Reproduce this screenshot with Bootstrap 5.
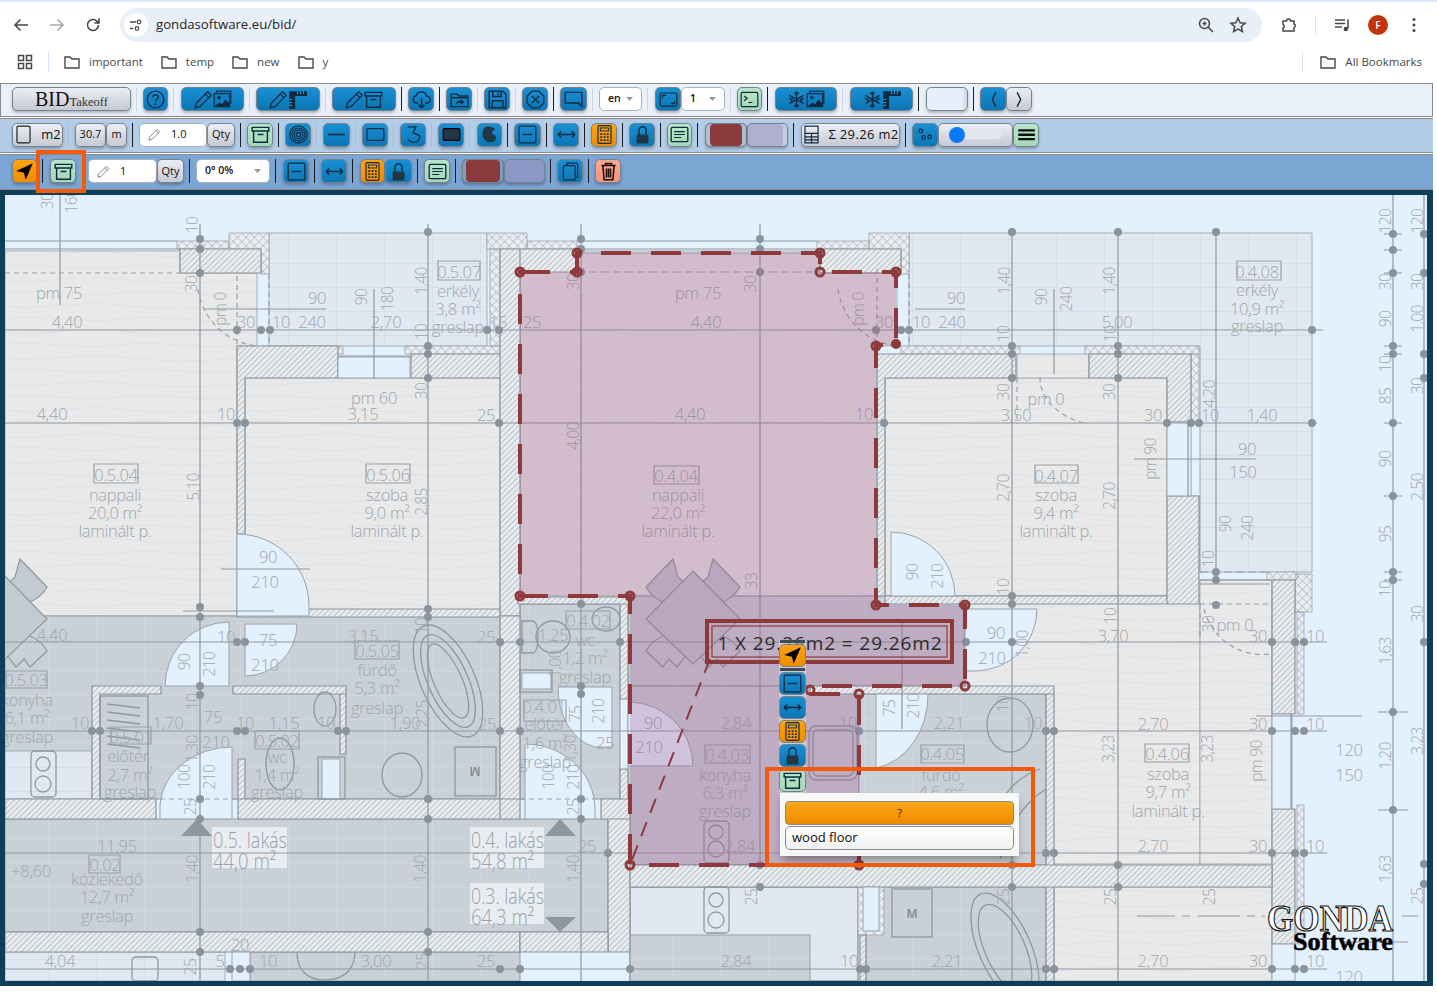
<!DOCTYPE html>
<html lang="en"><head><meta charset="utf-8"><title>BID Takeoff</title>
<link href="https://cdn.jsdelivr.net/npm/bootstrap@5.3.0/dist/css/bootstrap.min.css" rel="stylesheet">
<style>
html,body{height:993px;overflow:hidden;background:#fff}
body{font-family:"Open Sans","Liberation Sans",sans-serif;position:relative}
.top-strip{height:2px;background:#dde8f8}
.chrome-row{height:40px;padding-top:6px}
.chrome-ico{width:36px;flex:none;color:#474747;display:flex;justify-content:center}
.chrome-ico svg{width:18px;height:18px}
.first-ico{margin-left:3px}
.omni{width:1142px;flex:none;height:34px;margin-left:9px;background:#e9eff9;border-radius:17px;font-size:13.2px;color:#1f1f1f;padding-left:4px}
.site-dot{width:24px;height:24px;border-radius:50%;background:#fff;margin-right:8px;display:flex;align-items:center;justify-content:center}
.omni-end{margin-left:auto;gap:14px;padding-right:15px}
.omni-end svg{width:18px;height:18px;color:#474747}
.after-omni{gap:0;margin-left:9px;flex:none}
.cs{width:1px;height:20px;background:#d3e3fd;flex:none}
.avatar{width:20px;height:20px;border-radius:50%;background:#c5320d;color:#fff;font-size:10px;font-weight:600;display:flex;align-items:center;justify-content:center;flex:none}
.bm-row{height:41px;padding:0 0 2px 16px;font-size:11.5px;color:#474747;font-family:"Open Sans",sans-serif}
.bm{display:flex;align-items:center;gap:8px}
.bm svg{width:18px;height:18px}
.bm-grid{width:18px;height:18px;margin-right:14px}
.bm-a{margin-left:14px;margin-right:17px}.bm-b{margin-right:17px}
.bm-end{margin-left:auto;margin-right:15px;gap:16px}
.bar{display:flex;align-items:center;padding-left:12px;padding-bottom:2px;width:1433px}
.bar1{height:34px;background:#e9f0fa;border:1px solid #8a8a8a;margin-bottom:1px;padding-left:11px}
.bar2{height:35px;background:#b3cde8;border-top:1px solid #8a8a8a;border-bottom:1px solid #8a8a8a;margin-bottom:1px}
.bar3{height:36px;background:#7ba5d3;border-top:1px solid #8a8a8a;border-bottom:1px solid #8a8a8a}
.vs,.vd{width:1px;height:24px;margin:0 6px 0 5px;flex:none}
.vs{background:#cfd6de}.vd{background:#1c1c1c}
.bar2 .vs{background:#a9bed6}.bar3 .vs{background:transparent}
.wide{margin-right:7px}
.btn.tb{padding:0;height:24px;border-radius:5px;border:1px solid #75838e;display:inline-flex;align-items:center;justify-content:center;flex:none;box-shadow:0 2px 3px rgba(0,0,0,.25);font-size:11px;color:#111;font-family:"Open Sans",sans-serif}
.btn.tb svg{width:19px;height:19px;color:#0d2b40}
.b-blue{background:linear-gradient(#1a90d4,#0a76b4)}
.b-green{background:linear-gradient(#b9e6c9,#a5d8b8)}
.b-orange{background:linear-gradient(#ffa312,#ee8c00)}
.b-red{background:linear-gradient(#fcaa93,#f7917a)}
.b-gray{background:linear-gradient(#eceef4,#c7c9d3)}
.btn.b-blank{background:linear-gradient(90deg,#e6f0fc 85%,#cfd6e0)}
.btn.tb.b-wine{background:#8c3b3d;box-shadow:inset 4px 0 0 #aebfd6,inset -4px 0 0 #aebfd6,0 2px 3px rgba(0,0,0,.25)}
.btn.tb.b-lav{background:#b1afcf;box-shadow:inset -4px 0 0 #c6cde0,0 2px 3px rgba(0,0,0,.25)}
.bar3 .btn.tb.b-wine{box-shadow:inset 3px 0 0 #7f9ec5,inset -3px 0 0 #7f9ec5,0 2px 3px rgba(0,0,0,.25)}
.bar3 .btn.tb.b-lav{background:#8b97c4;box-shadow:0 2px 3px rgba(0,0,0,.25)}
.w21{width:21px}.w25{width:25px}.w26{width:26px}.w27{width:27px}.w28{width:28px}.w31{width:31px}.w41{width:41px}.w42{width:42px}.w43{width:43px}.w44{width:44px}.w51{width:51px}.w62{width:62px}.w63{width:63px}.w64{width:64px}.w68{width:68px}.w69{width:69px}.w74{width:74px}.w75{width:75px}.w99{width:99px}.w119{width:119px}
.brand{font-family:"Liberation Serif",serif;font-size:20px;line-height:1}
.brand small{font-size:12.5px;color:#333}
.btn.tb.t13{font-size:13px}
.btn.tb.t12{font-size:13px;gap:7px;letter-spacing:.35px}
.fieldish{height:24px;border-radius:5px;background:#fff;border:1px solid #aab2bb;display:flex;align-items:center;font-size:11px;color:#111;padding-left:8px;gap:10px;flex:none;font-weight:500}
.fieldish svg{width:13px;height:13px;color:#777}
.form-select.sel{height:24px;padding:0 0 0 8px;font-size:10.5px;font-weight:600;border-radius:5px;border:1px solid #aab2bb;flex:none;color:#111;background-size:7px 4px;background-position:right 8px center;background-image:url("data:image/svg+xml,%3csvg xmlns='http://www.w3.org/2000/svg' viewBox='0 0 7 4'%3e%3cpath fill='%23999' d='M0 0h7L3.500 4z'/%3e%3c/svg%3e");font-family:"Open Sans",sans-serif}
.btn.tb.sldr{padding:0 10px}
.form-range.rng{height:14px;padding:0}
.form-range.rng::-webkit-slider-runnable-track{height:9px;background:#e3e7ee;border-radius:5px}
.form-range.rng::-webkit-slider-thumb{width:16px;height:16px;margin-top:-3.5px;background:#0d78fb}
.stage{width:1433px;height:796px;background:#0e3e5a;padding:5px 6px 5px 5px;position:relative}
.plan{display:block;width:1422px;height:786px;background:#e3f0fe}
.stage .t{font-family:"Open Sans",sans-serif;font-weight:300;font-size:16.5px;fill:#a0a6ad;text-anchor:middle;dominant-baseline:central;letter-spacing:-.3px}
.stage .t.r{font-size:15.5px;letter-spacing:-.6px}
.stage .t.big{font-size:22px;text-anchor:start;fill:#9aa1a8;letter-spacing:0}
.stage .t.em{font-size:12px;font-weight:600;fill:#7e868e}
.hw{fill:url(#hatch);stroke:#8a939b;stroke-width:1.2}
.xw{fill:url(#xh);stroke:#9aa3ab;stroke-width:.8}
.wd{fill:url(#wood);stroke:#a7aeb5;stroke-width:1}
.tl{fill:url(#tile);stroke:#939ba3;stroke-width:1}
.tl2{fill:url(#tile2);stroke:#a4adb6;stroke-width:1}
.pl{fill:#e1e8f1;stroke:#939ba3;stroke-width:1.500}
.dr{fill:#e3f0fe;stroke:#99a2ab;stroke-width:1}
.fu{fill:none;stroke:#8f98a0;stroke-width:1.3}
.nb{fill:none;stroke:#99a0a7;stroke-width:1.2}
.dm{fill:none;stroke:#8f98a0;stroke-width:1.2}
.dt{fill:none;stroke:#8a939b;stroke-width:8;stroke-linecap:round}
.sel-fill{fill:rgb(163,90,143);fill-opacity:.3}
.sel-line{fill:none;stroke:#8e3a3c;stroke-width:4;stroke-dasharray:30 20}
.sel-nd{fill:none;stroke:#8e3a3c;stroke-width:3}
.lbl{font-family:"Open Sans",sans-serif;font-size:19px;fill:#2c2c2c;text-anchor:middle;letter-spacing:.9px}
.logo1{font-family:"Liberation Serif",serif;font-weight:700;font-size:38px;fill:#fff;stroke:#111;stroke-width:1.200;text-anchor:start}
.logo2{font-family:"Liberation Serif",serif;font-weight:700;font-size:25px;fill:#000;stroke:#000;stroke-width:.5;text-anchor:start}
.vbar{position:absolute;left:779px;top:450px;width:27px;display:flex;flex-direction:column;background:rgba(235,235,235,.45)}
.vbar .btn.tb{width:27px;height:23px;box-shadow:none;margin-bottom:1px;border-radius:5px}
.vrule{height:3px;background:#3e4c55;margin:0 1px 1px}
.vbar .gapm{margin-top:1px}
.pop{position:absolute;left:780px;top:603px;width:239px;height:63px;background:#f7f7f7;padding:8px 5px 7px;box-shadow:0 6px 8px -2px rgba(0,0,0,.35)}
.btn.pop-q{display:block;width:100%;height:24px;padding:0;font-size:11px;color:#222;border:1px solid #8a8a8a;border-radius:4px;background:linear-gradient(#ffa815,#ec8a02)}
.btn.pop-w{display:block;width:100%;height:24px;margin-top:1px;padding:0 6px;text-align:left;font-size:13px;color:#111;border:1px solid #8a8a8a;border-radius:5px;background:linear-gradient(#fff,#f0f0f0)}
.mark-box{position:absolute;border:4px solid #f55a0a;pointer-events:none}
.mb-a{left:36px;top:150px;width:50px;height:43px}
.mb-b{left:765px;top:767px;width:270px;height:100px}
.sprite{position:absolute;width:0;height:0}
</style></head><body>
<svg class="sprite" aria-hidden="true"><defs>
<g id="pencil-shape"><path d="M11.5 1.5l3 3L5 14l-4 1 1-4z" fill="none" stroke="currentColor" stroke-width="1.1"/><path d="M9.5 3.5l3 3" stroke="currentColor" stroke-width="1"/></g>
<symbol id="i-pencil" viewBox="0 0 16 16"><use href="#pencil-shape"/></symbol>
<symbol id="i-help" viewBox="0 0 16 16"><circle cx="8" cy="8" r="7" fill="none" stroke="currentColor" stroke-width="1.1"/><path d="M5.6 6.2C5.7 3.4 10.4 3.4 10.4 6c0 1.8-2.4 1.8-2.4 3.8" fill="none" stroke="currentColor" stroke-width="1.2"/><circle cx="8" cy="12" r=".8" fill="currentColor"/></symbol>
<symbol id="i-image" viewBox="0 0 16 16"><rect x="3" y="1" width="12" height="10" fill="none" stroke="currentColor"/><rect x="1" y="3" width="13" height="11" fill="#0e80c2" stroke="currentColor"/><circle cx="5" cy="6.5" r="1.5" fill="currentColor"/><path d="M1.5 13.5l4-3 2 1.500 3-4 3 3v3z" fill="currentColor"/></symbol>
<symbol id="i-ruler" viewBox="0 0 16 16"><path d="M1 1h15v4H6v11H1z" fill="currentColor"/><path d="M8 1v2.500M10.500 1v2.500M13 1v2.500M1 8h2.500M1 10.500h2.500M1 13h2.500" stroke="#2b95d4" stroke-width="1"/></symbol>
<symbol id="i-archive" viewBox="0 0 16 16"><path d="M1 2h14v3H1zM2.200 5v9.500h11.600V5M5.500 8h5" fill="none" stroke="currentColor" stroke-width="1.200"/></symbol>
<symbol id="i-cloud" viewBox="0 0 16 16"><path d="M5 11H3.800A3.200 3.200 0 0 1 3.500 4.700 4.600 4.600 0 0 1 12.300 5 3 3 0 0 1 12.500 11H11M8 6.500V15M5.500 12.500L8 15l2.500-2.500" fill="none" stroke="currentColor" stroke-width="1.200"/></symbol>
<symbol id="i-folder" viewBox="0 0 16 16"><path d="M1 3.500h5l1.500 1.500h7.500v9H1zM1 6.500h14" fill="none" stroke="currentColor" stroke-width="1.200"/><path d="M5 12c.3-2.500 2-3 4-3V7.500L12 10l-3 2.500V11c-1.700 0-3 .2-4 1z" fill="currentColor"/></symbol>
<symbol id="i-save" viewBox="0 0 16 16"><path d="M1 1h11.500L15 3.500V15H1zM4 1v4.500h7V1M8.500 2v2.500M3.500 15V9h9v6" fill="none" stroke="currentColor" stroke-width="1.200"/></symbol>
<symbol id="i-xo" viewBox="0 0 16 16"><path d="M5 1h6l4 4v6l-4 4H5l-4-4V5zM5 5l6 6M11 5l-6 6" fill="none" stroke="currentColor" stroke-width="1.100"/></symbol>
<symbol id="i-chat" viewBox="0 0 16 16"><path d="M1 2h14v12l-3-3H1z" fill="none" stroke="currentColor" stroke-width="1.200"/></symbol>
<symbol id="i-screen" viewBox="0 0 16 16"><rect x="1" y="2.500" width="14" height="11" rx="1" fill="none" stroke="currentColor"/><path d="M3 7V4.500h3M13 9v2.500h-3" fill="none" stroke="currentColor"/></symbol>
<symbol id="i-term" viewBox="0 0 16 16"><rect x="1" y="2" width="14" height="12" rx="1" fill="none" stroke="currentColor"/><path d="M3.500 5L6 7 3.500 9M7 10.500h3.500" fill="none" stroke="currentColor"/></symbol>
<symbol id="i-snow" viewBox="0 0 16 16"><path d="M8 1v14M2 4.500l12 7M14 4.500l-12 7M6.200 2.200L8 4l1.800-1.800M6.200 13.800L8 12l1.800 1.800M1.500 7l2.800.8-.7 2.500M14.500 7l-2.800.8.700 2.500" fill="none" stroke="currentColor" stroke-width="1.200"/></symbol>
<symbol id="i-target" viewBox="0 0 16 16"><circle cx="8" cy="8" r="7.300" fill="none" stroke="currentColor"/><circle cx="8" cy="8" r="5.500" fill="none" stroke="currentColor"/><circle cx="8" cy="8" r="3.700" fill="none" stroke="currentColor"/><circle cx="8" cy="8" r="1.800" fill="none" stroke="currentColor"/></symbol>
<symbol id="i-dash" viewBox="0 0 16 16"><path d="M1 8h14" stroke="currentColor" stroke-width="1.400"/></symbol>
<symbol id="i-rect" viewBox="0 0 16 16"><rect x="1" y="3" width="14" height="10" rx="1" fill="none" stroke="currentColor" stroke-width="1.100"/></symbol>
<symbol id="i-lasso" viewBox="0 0 16 16"><path d="M3 1.500h7L7.500 6.500 13 9c1 3-1.500 5.500-4 5.500-2.500 0-4.500-.5-5.500-2.500" fill="none" stroke="currentColor" stroke-width="1.100"/></symbol>
<symbol id="i-rectf" viewBox="0 0 16 16"><rect x="1" y="3" width="14" height="10" rx="1" fill="#213746" stroke="#000"/></symbol>
<symbol id="i-blob" viewBox="0 0 16 16"><path d="M5 1.500c3-1 6 .5 8 2-1.500 1-3 1.500-3 3 0 2 4 1.500 3.500 4.500-.500 3-2.500 4-5.500 3.500C4.500 14 2 11.500 2 8c0-3 1-5.500 3-6.500z" fill="#213746"/></symbol>
<symbol id="i-dsq" viewBox="0 0 16 16"><rect x="1" y="1" width="14" height="14" rx="1" fill="none" stroke="currentColor" stroke-width="1.100"/><path d="M4 8h8" stroke="currentColor" stroke-width="1.200"/></symbol>
<symbol id="i-lr" viewBox="0 0 16 16"><path d="M1 8h14M3.500 5.500L1 8l2.500 2.500M12.500 5.500L15 8l-2.500 2.500" fill="none" stroke="currentColor" stroke-width="1.100"/></symbol>
<symbol id="i-calc" viewBox="0 0 16 16"><rect x="2.500" y="0.500" width="11" height="15" rx="1" fill="none" stroke="currentColor"/><rect x="4.500" y="2.500" width="7" height="2.500" fill="none" stroke="currentColor" stroke-width=".8"/><path d="M4.500 7h1.500v1.500H4.500zM7.300 7h1.500v1.500H7.300zM10 7h1.500v1.500H10zM4.500 9.500h1.500V11H4.500zM7.300 9.500h1.500V11H7.300zM10 9.500h1.500V11H10zM4.500 12h1.500v1.500H4.500zM7.300 12h1.500v1.500H7.300zM10 12h1.500v1.500H10z" fill="currentColor"/></symbol>
<symbol id="i-lock" viewBox="0 0 16 16"><path d="M5 8V4.500a3 3 0 0 1 6 0V8" fill="none" stroke="currentColor" stroke-width="1.200"/><rect x="3" y="8" width="10" height="7.500" rx=".5" fill="#213746"/></symbol>
<symbol id="i-card" viewBox="0 0 16 16"><rect x="1" y="2" width="14" height="12" rx="1" fill="none" stroke="currentColor" stroke-width="1.100"/><path d="M3.500 5.500h9M3.500 8h9M3.500 10.500h6" stroke="currentColor" stroke-width="1"/></symbol>
<symbol id="i-table" viewBox="0 0 16 16"><path d="M2.500 1h11v14h-11zM2.500 7h11M2.500 10h11M2.500 12.500h11M8 7v8" fill="none" stroke="currentColor" stroke-width="1"/></symbol>
<symbol id="i-dots" viewBox="0 0 16 16"><circle cx="4" cy="5" r="1.500" fill="none" stroke="currentColor"/><circle cx="6.500" cy="10.500" r="1.500" fill="none" stroke="currentColor"/><circle cx="11.500" cy="10" r="1.500" fill="none" stroke="currentColor"/></symbol>
<symbol id="i-lines" viewBox="0 0 16 16"><path d="M1 3.500h14v2H1zM1 7.200h14v2H1zM1 10.900h14v2H1z" fill="#111"/></symbol>
<symbol id="i-nav" viewBox="0 0 16 16"><path d="M15 1L1 7.500l6.500 1.500L9 15z" fill="#000"/></symbol>
<symbol id="i-copy" viewBox="0 0 16 16"><rect x="2" y="3" width="10" height="12" rx="1" fill="none" stroke="currentColor" stroke-width="1.100"/><path d="M5 3V1h8a1 1 0 0 1 1 1v11h-2" fill="none" stroke="currentColor" stroke-width="1.100"/></symbol>
<symbol id="i-trash" viewBox="0 0 16 16"><path d="M2 3h12M5.500 3V1.300h5V3M3.300 3l1 12h7.400l1-12M6.300 5.500v7.500M9.700 5.500v7.500M8 5.500v7.500" fill="none" stroke="#1a0d0a" stroke-width="1.300"/></symbol>
<symbol id="i-folder-o" viewBox="0 0 18 18"><path d="M2 4h5l2 2h7v9H2z" fill="none" stroke="currentColor" stroke-width="1.400"/></symbol>
</defs></svg>

<div class="top-strip"></div>
<div class="chrome-row d-flex align-items-center">
 <span class="chrome-ico first-ico"><svg viewBox="0 0 18 18"><path d="M16 9H3M8.500 3.500L3 9l5.500 5.500" fill="none" stroke="currentColor" stroke-width="1.600"/></svg></span>
 <span class="chrome-ico"><svg viewBox="0 0 18 18"><path d="M2 9h13M9.500 3.500L15 9l-5.500 5.500" fill="none" stroke="#a8a8a8" stroke-width="1.600"/></svg></span>
 <span class="chrome-ico"><svg viewBox="0 0 18 18"><path d="M14.500 9a5.500 5.500 0 1 1-1.600-3.900L15 7M15 2.500V7h-4.500" fill="none" stroke="currentColor" stroke-width="1.600"/></svg></span>
 <div class="omni d-flex align-items-center">
  <span class="site-dot"><svg width="14" height="14" viewBox="0 0 14 14"><path d="M1 4h6M1 10.500h3" stroke="#474747" stroke-width="1.300"/><circle cx="10" cy="4" r="1.800" fill="none" stroke="#474747" stroke-width="1.200"/><circle cx="8" cy="10.500" r="1.800" fill="none" stroke="#474747" stroke-width="1.200"/></svg></span>
  <span>gondasoftware.eu/bid/</span>
  <span class="omni-end d-flex align-items-center">
   <svg viewBox="0 0 18 18"><circle cx="7.500" cy="7.500" r="5" fill="none" stroke="currentColor" stroke-width="1.500"/><path d="M11 11l5 5M5.500 7.500h4M7.500 5.500v4" stroke="currentColor" stroke-width="1.500"/></svg>
   <svg viewBox="0 0 18 18"><path d="M9 2l2.100 4.700 5 .5-3.800 3.300 1.100 5L9 13l-4.400 2.500 1.100-5L1.900 7.200l5-.5z" fill="none" stroke="currentColor" stroke-width="1.500"/></svg>
  </span>
 </div>
 <div class="after-omni d-flex align-items-center">
  <span class="chrome-ico"><svg viewBox="0 0 18 18"><path d="M3 5h3.500a2 2 0 0 1 4 0H14v3a1.800 1.800 0 0 1 0 3.500V15H3v-3a1.500 1.500 0 0 0 1-2.500 1.500 1.500 0 0 0-1-1z" fill="none" stroke="currentColor" stroke-width="1.500"/></svg></span>
  <span class="cs ms-2 me-2"></span>
  <span class="chrome-ico me-2"><svg viewBox="0 0 18 18"><path d="M2 4h10M2 7.500h10M2 11h7" stroke="currentColor" stroke-width="1.400"/><path d="M15 3.500v9" stroke="currentColor" stroke-width="1.500"/><circle cx="12.800" cy="13" r="2.200" fill="currentColor"/></svg></span>
  <span class="avatar">F</span>
  <span class="chrome-ico ms-2"><svg viewBox="0 0 18 18"><circle cx="9" cy="3.500" r="1.500" fill="currentColor"/><circle cx="9" cy="9" r="1.500" fill="currentColor"/><circle cx="9" cy="14.500" r="1.500" fill="currentColor"/></svg></span>
 </div>
</div>
<div class="bm-row d-flex align-items-center">
 <svg class="bm-grid" viewBox="0 0 18 18"><path d="M2.500 2.500h5v5h-5zM10.500 2.500h5v5h-5zM2.500 10.500h5v5h-5zM10.500 10.500h5v5h-5z" fill="none" stroke="#474747" stroke-width="1.500"/></svg>
 <span class="cs"></span>
 <span class="bm bm-a"><svg><use href="#i-folder-o"/></svg>important</span>
 <span class="bm bm-b"><svg><use href="#i-folder-o"/></svg>temp</span>
 <span class="bm bm-b"><svg><use href="#i-folder-o"/></svg>new</span>
 <span class="bm"><svg><use href="#i-folder-o"/></svg>y</span>
 <span class="bm-end d-flex align-items-center"><span class="cs"></span><span class="bm"><svg><use href="#i-folder-o"/></svg>All Bookmarks</span></span>
</div>

<div class="bar bar1">
 <button class="btn tb b-gray w119 brand" type="button"><span class="brand">BID<small>Takeoff</small></span></button><i class="vs"></i>
 <button class="btn tb b-blue w25" type="button"><svg><use href="#i-help"/></svg></button><i class="vs wide"></i>
 <button class="btn tb b-blue w63" type="button"><svg><use href="#i-pencil"/></svg><svg><use href="#i-image"/></svg></button><i class="vs"></i>
 <button class="btn tb b-blue w64" type="button"><svg><use href="#i-pencil"/></svg><svg><use href="#i-ruler"/></svg></button><i class="vs"></i>
 <button class="btn tb b-blue w64" type="button"><svg><use href="#i-pencil"/></svg><svg><use href="#i-archive"/></svg></button><i class="vd"></i>
 <button class="btn tb b-blue w26" type="button"><svg><use href="#i-cloud"/></svg></button><i class="vd"></i>
 <button class="btn tb b-blue w26" type="button"><svg><use href="#i-folder"/></svg></button><i class="vs"></i>
 <button class="btn tb b-blue w26" type="button"><svg><use href="#i-save"/></svg></button><i class="vs"></i>
 <button class="btn tb b-blue w26" type="button"><svg><use href="#i-xo"/></svg></button><i class="vd"></i>
 <button class="btn tb b-blue w27" type="button"><svg><use href="#i-chat"/></svg></button><i class="vs"></i>
 <select class="form-select sel w43" aria-label="language"><option>en</option></select><i class="vs wide"></i>
 <button class="btn tb b-blue w26" type="button"><svg><use href="#i-screen"/></svg></button>
 <select class="form-select sel w44" aria-label="page"><option>1</option></select><i class="vs"></i>
 <button class="btn tb b-green w25" type="button"><svg><use href="#i-term"/></svg></button><i class="vd wide"></i>
 <button class="btn tb b-blue w62" type="button"><svg><use href="#i-snow"/></svg><svg><use href="#i-image"/></svg></button><i class="vs wide"></i>
 <button class="btn tb b-blue w63" type="button"><svg><use href="#i-snow"/></svg><svg><use href="#i-ruler"/></svg></button><i class="vd wide"></i>
 <button class="btn tb b-blank w42" type="button" aria-label="blank"></button><i class="vd"></i>
 <button class="btn tb b-blue w26" type="button"><svg viewBox="0 0 16 16"><path d="M10 2L7 8l3 6" fill="none" stroke="currentColor" stroke-width="1.200"/></svg></button>
 <button class="btn tb b-gray w26" type="button"><svg viewBox="0 0 16 16"><path d="M6 2l3 6-3 6" fill="none" stroke="currentColor" stroke-width="1.200"/></svg></button>
</div>

<div class="bar bar2">
 <button class="btn tb b-gray w51 t13" type="button"><svg viewBox="0 0 16 16"><rect x="2.500" y="1" width="11" height="14" rx="1" fill="none" stroke="#222"/></svg><span class="ms-2">m2</span></button><i class="vs"></i>
 <button class="btn tb b-gray w31" type="button">30.7</button><button class="btn tb b-gray w21" type="button">m</button><i class="vd"></i>
 <div class="fieldish w68"><svg><use href="#i-pencil"/></svg><span>1.0</span></div><button class="btn tb b-gray w28" type="button">Qty</button><i class="vd"></i>
 <button class="btn tb b-green w26" type="button"><svg><use href="#i-archive"/></svg></button><i class="vd"></i>
 <button class="btn tb b-blue w26" type="button"><svg><use href="#i-target"/></svg></button><i class="vs"></i>
 <button class="btn tb b-blue w27" type="button"><svg><use href="#i-dash"/></svg></button><i class="vs"></i>
 <button class="btn tb b-blue w26" type="button"><svg><use href="#i-rect"/></svg></button><i class="vs"></i>
 <button class="btn tb b-blue w26" type="button"><svg><use href="#i-lasso"/></svg></button><i class="vs"></i>
 <button class="btn tb b-blue w26" type="button"><svg><use href="#i-rectf"/></svg></button><i class="vs wide"></i>
 <button class="btn tb b-blue w25" type="button"><svg><use href="#i-blob"/></svg></button><i class="vd"></i>
 <button class="btn tb b-blue w27" type="button"><svg><use href="#i-dsq"/></svg></button><i class="vd"></i>
 <button class="btn tb b-blue w26" type="button"><svg><use href="#i-lr"/></svg></button><i class="vd"></i>
 <button class="btn tb b-orange w26" type="button"><svg><use href="#i-calc"/></svg></button><i class="vd"></i>
 <button class="btn tb b-blue w26" type="button"><svg><use href="#i-lock"/></svg></button><i class="vd"></i>
 <button class="btn tb b-green w25" type="button"><svg><use href="#i-card"/></svg></button><i class="vd wide"></i>
 <button class="btn tb b-wine w42" type="button" aria-label="colour"></button><button class="btn tb b-lav w41" type="button" aria-label="colour"></button><i class="vd wide"></i>
 <button class="btn tb b-gray w99 t12" type="button"><svg><use href="#i-table"/></svg><span>Σ 29.26 m2</span></button><i class="vd"></i>
 <button class="btn tb b-blue w26" type="button"><svg><use href="#i-dots"/></svg></button>
 <div class="btn tb b-gray w75 sldr"><input class="form-range rng" type="range" value="0" aria-label="scale"></div>
 <button class="btn tb b-green w26" type="button"><svg><use href="#i-lines"/></svg></button>
</div>

<div class="bar bar3">
 <button class="btn tb b-orange w25" type="button"><svg><use href="#i-nav"/></svg></button><i class="vd wide"></i>
 <button class="btn tb b-green w26" type="button"><svg><use href="#i-archive"/></svg></button><i class="vs"></i>
 <div class="fieldish w69"><svg><use href="#i-pencil"/></svg><span>1</span></div><button class="btn tb b-gray w27" type="button">Qty</button><i class="vd"></i>
 <select class="form-select sel w74" aria-label="rotation"><option>0° 0%</option></select><i class="vd wide"></i>
 <button class="btn tb b-blue w26" type="button"><svg><use href="#i-dsq"/></svg></button><i class="vd"></i>
 <button class="btn tb b-blue w26" type="button"><svg><use href="#i-lr"/></svg></button><i class="vd wide"></i>
 <button class="btn tb b-orange w25" type="button"><svg><use href="#i-calc"/></svg></button><button class="btn tb b-blue w27" type="button"><svg><use href="#i-lock"/></svg></button><i class="vd"></i>
 <button class="btn tb b-green w26" type="button"><svg><use href="#i-card"/></svg></button><i class="vd"></i>
 <button class="btn tb b-wine w42" type="button" aria-label="colour"></button><button class="btn tb b-lav w41" type="button" aria-label="colour"></button><i class="vd"></i>
 <button class="btn tb b-blue w26" type="button"><svg><use href="#i-copy"/></svg></button><i class="vd"></i>
 <button class="btn tb b-red w26" type="button"><svg><use href="#i-trash"/></svg></button>
</div>

<div class="stage">
<svg class="plan" viewBox="5 196 1422 786" xmlns="http://www.w3.org/2000/svg">
<defs>
<pattern id="hatch" width="4" height="4" patternUnits="userSpaceOnUse" patternTransform="rotate(45)"><rect width="4" height="4" fill="#e9ecef"/><path d="M0 0v4" stroke="#939ca5" stroke-width="1.100"/></pattern>
<pattern id="xh" width="6" height="6" patternUnits="userSpaceOnUse" patternTransform="rotate(45)"><rect width="6" height="6" fill="#e9edf1"/><path d="M0 0v6M0 0h6" stroke="#9ea7af" stroke-width="1"/></pattern>
<pattern id="tile" width="48" height="24" patternUnits="userSpaceOnUse"><rect width="48" height="24" fill="#c9d0d8"/><path d="M0 0h48M0 0v24" stroke="#d6dce3" stroke-width="1"/></pattern>
<pattern id="tile2" width="48" height="24" patternUnits="userSpaceOnUse"><rect width="48" height="24" fill="#e1e8f1"/><path d="M0 0h48M0 0v24" stroke="#ced7e2" stroke-width="1"/></pattern>
<pattern id="wood" width="240" height="26" patternUnits="userSpaceOnUse"><rect width="240" height="26" fill="#e8e9e8"/><path d="M0 8c40-6 80 6 120 0s80 6 120 0M0 21c40 5 80-6 120-1s80 5 120 1" fill="none" stroke="#dde3e8" stroke-width="1"/></pattern>
<g id="tbl">
<path d="M-47 588L-20 560-15 578-2 590-18 606C-32 604-42 597-47 588ZM47 588L20 560 15 578 2 590 18 606C32 604 42 597 47 588Z" fill="#c3cad2" stroke="#8f98a0" stroke-width="1.200"/>
<path d="M-47 652L-30 668-24 660-16 668-2 650-18 634C-32 636-42 643-47 652ZM47 652L30 668 24 660 16 668 2 650 18 634C32 636 42 643 47 652Z" fill="#c9d0d8" stroke="#8f98a0" stroke-width="1.200"/>
<path d="M0 572L47 620 0 665-47 620Z" fill="#c3cad2" stroke="#8f98a0" stroke-width="1.200"/>
</g>
</defs>

<!-- floors -->
<path class="wd" d="M5 252H180V274H257V347H237V617H5Z"/>
<rect class="wd" x="245" y="379" width="255" height="238"/>
<path class="wd" d="M520 252H820V274H897V347H877V597H520Z"/>
<rect class="wd" x="885" y="379" width="282" height="218"/>
<rect class="wd" x="1017" y="355" width="72" height="24"/>
<rect class="wd" x="965" y="597" width="235" height="268"/>
<rect class="wd" x="1200" y="581" width="72" height="284"/>
<rect class="wd" x="1054" y="888" width="218" height="94"/>
<path class="tl2" d="M269 234H487V347H269Z"/>
<path class="tl2" d="M909 234H1312V573H1200V347H909Z"/>
<rect class="tl" x="5" y="617" width="495" height="183"/>
<rect class="tl2" x="5" y="752" width="87" height="48"/>
<rect class="tl" x="520" y="605" width="100" height="195"/>
<rect class="tl" x="628" y="597" width="337" height="90"/>
<rect class="tl" x="628" y="687" width="231" height="179"/>
<rect class="tl" x="859" y="695" width="187" height="171"/>
<rect class="tl" x="5" y="820" width="603" height="113"/>
<rect class="tl2" x="5" y="953" width="220" height="29"/>
<rect class="tl" x="250" y="953" width="270" height="29"/>
<rect class="pl" x="630" y="888" width="228" height="94"/>
<rect class="tl" x="630" y="936" width="180" height="46"/>
<rect class="tl" x="866" y="888" width="180" height="94"/>

<!-- insulation -->
<path class="xw" d="M177 242H229V250H177ZM229 234H269V275H261V250H229ZM262 347H343V355H262ZM405 347H500V355H405ZM487 234H527V250H487ZM527 242H577V250H527ZM490 250H500V347H490Z"/>
<path class="xw" d="M817 242H869V250H817ZM869 234H909V275H901V250H869ZM901 347H1020V355H901ZM1085 347H1199V355H1085ZM1191 355H1199V423H1191ZM1191 497H1199V573H1191ZM1267 573H1297V581H1267ZM1295 575H1312V613H1295ZM1297 613H1304V715H1297ZM1297 806H1304V945H1297ZM858 888H884V936H858Z"/>
<path class="dm" d="M5 242H177M5 250H180M577 242H817M577 250H820M577 254H820"/>
<path class="nb" stroke-dasharray="8 4" d="M1200 573H1267M577 273H820"/>
<path class="dm" d="M1200 581H1270M1200 585H1270"/>

<!-- walls -->
<path class="hw" d="M180 250H261V274H180ZM237 347H338V379H245V535H237ZM411 355H500V379H411ZM500 250H520V617H500ZM520 250H577V273H520Z"/>
<path class="hw" d="M820 250H901V274H820ZM877 355H1016V379H885V597H877ZM1089 355H1191V423H1167V379H1089ZM1167 497H1199V605H1167ZM885 597H1167V605H885ZM1272 581H1295V715H1272ZM1272 810H1295V945H1272Z"/>
<path class="hw" d="M237 610H500V618H237ZM5 800H156V820H5ZM238 800H520V820H238ZM500 617H520V820H500ZM92 687H161V695H100V800H92ZM233 687H346V695H233ZM340 695H346V755H340ZM238 760H245V800H238ZM601 800H630V820H601ZM608 820H630V953H608ZM5 933H520V953H5ZM518 598H630V605H518ZM620 605H628V700H620ZM620 770H628V800H620Z"/>
<path class="hw" d="M630 866H1272V888H630ZM810 687H1054V695H810ZM1046 695H1054V866H1046ZM1046 888H1054V982H1046ZM520 933H608V953H520ZM860 936H866V982H860Z"/>
<!-- windows -->
<path class="dr" d="M338 358H410V379H338ZM1167 423H1191V497H1167ZM1272 715H1292V810H1272ZM1272 945H1295V982H1272ZM522 674H551V690H522ZM322 760H340V800H322ZM232 953H250V982H232ZM863 888H879V932H863ZM620 700H628V770H620Z"/>
<path class="dm" d="M338 357H410M1188 423V497M1291 715V810" stroke-width="2"/>

<!-- doors -->
<path class="dr" d="M237 617V535A72 72 0 0 1 309 607V617Z"/>
<path class="dr" d="M229 687H165A64 64 0 0 1 229 623Z"/>
<path class="dr" d="M245 625H297A52 52 0 0 1 245 677Z"/>
<path class="dr" d="M232 820H160V805A72 62 0 0 1 232 748Z"/>
<path class="dr" d="M525 745A70 65 0 0 1 595 810V820H525Z"/>
<path class="dr" d="M558 688H612V748H595A45 60 0 0 1 558 688Z"/>
<path class="dr" d="M891 597V533A64 64 0 0 1 955 597Z"/>
<path class="dr" d="M965 610H1037A62 62 0 0 1 975 672H965Z"/>
<path class="dr" d="M876 695H928A62 74 0 0 1 876 769Z"/>
<path class="dr" d="M628 703A65 64 0 0 1 693 767H628Z"/>
<path class="nb" stroke-dasharray="5 4" d="M5 274H180M237 277V347M269 275V347M198 290A66 66 0 0 0 258 347M1017 379V425M1040 378A66 48 0 0 0 1088 425M1200 605V640M1200 605H1272M1204 610A60 60 0 0 0 1270 655M1272 590V655M877 270V347M909 275V347M838 290A66 66 0 0 0 898 347M160 800H237M520 800H595"/>

<!-- furniture -->
<g class="fu">
<use href="#tbl" x="0" y="0"/>
<use href="#tbl" x="693" y="0"/>
<rect x="31" y="752" width="25" height="46" rx="4"/><circle cx="43" cy="765" r="7"/><circle cx="43" cy="785" r="8"/>
<rect x="704" y="888" width="25" height="46" rx="4"/><circle cx="716" cy="901" r="7"/><circle cx="716" cy="921" r="8"/>
<rect x="704" y="822" width="25" height="42" rx="4"/><circle cx="716" cy="833" r="7"/><circle cx="716" cy="850" r="8"/>
<ellipse cx="448" cy="682" rx="20" ry="50" transform="rotate(-24 448 682)"/><ellipse cx="448" cy="682" rx="27" ry="60" transform="rotate(-24 448 682)"/><ellipse cx="448" cy="682" rx="14" ry="40" transform="rotate(-24 448 682)"/>
<ellipse cx="402" cy="776" rx="20" ry="22"/><rect x="455" y="748" width="41" height="49"/>
<rect x="100" y="697" width="48" height="103"/><path d="M107 705l33 4M107 713l33 4M107 721l33 4M107 729l33 4M107 737l33 4M107 745l33 4"/>
<ellipse cx="325" cy="710" rx="11" ry="17"/><ellipse cx="280" cy="765" rx="14" ry="26"/><rect x="318" y="758" width="27" height="42"/>
<ellipse cx="553" cy="638" rx="17" ry="16"/><ellipse cx="606" cy="620" rx="14" ry="12"/><path d="M522 622h10c4 0 6 6 6 16s-2 16-6 16h-10z"/><rect x="520" y="671" width="32" height="22"/>
<rect x="813" y="731" width="40" height="46" rx="5"/><rect x="809" y="727" width="48" height="54" rx="7"/>
<ellipse cx="1010" cy="726" rx="23" ry="27"/><path d="M985 850C990 810 1010 780 1040 770M1000 860C1010 820 1030 800 1046 790"/>
<rect x="892" y="890" width="40" height="48" fill="#c9d0d8"/>
<ellipse cx="1005" cy="950" rx="20" ry="48" transform="rotate(-24 1005 950)"/><ellipse cx="1005" cy="950" rx="26" ry="60" transform="rotate(-24 1005 950)"/>
<path d="M297 953c0 16 8 28 28 28s30-12 30-28"/>
<rect x="132" y="958" width="26" height="24" rx="4"/>
<path d="M181 837L197 820 212 837Z M545 837L560 820 576 837Z M545 918L576 918 560 933Z" fill="#8e969e" stroke="none"/>
</g>

<!-- white tags -->
<path fill="#e9edf1" d="M212 828H287V869H212ZM470 828H544V869H470ZM470 884H544V925H470Z"/>

<!-- dimension lines -->
<path class="dm" d="M5 331H1323M5 424H1317M5 643H1327M5 732H1327M5 854H1327M5 970H1327M60 196V306M200 225V982M428 225V982M581 225V982M760 225V866M902 620V730M1012 232V982M1118 232V982M1216 232V573M1393 196V982M1424 196V982"/>
<path class="dm" d="M205 310H326M374 290V380M915 310H965M1054 290V375M1134 460H1256M221 570H310M183 612H274M1256 717H1362M1340 943H1408M1384 235H1402M1384 251H1402M1384 274H1402M1384 347H1402M1384 355H1402M1384 424H1402M1384 497H1402M1384 573H1402M1384 581H1402M1378 713H1408M1378 811H1408"/>
<path class="dm" d="M1137 917H1175M1182 917H1190M1198 917H1240M1247 917H1255M1262 917H1265M1402 917H1418" stroke-width="2"/>
<path class="dt" d="M200 240h0M200 250h0M200 274h0M581 240h0M581 250h0M581 273h0M760 240h0M760 250h0M760 273h0M237 331h0M261 331h0M270 331h0M487 331h0M499 331h0M428 233h0M428 347h0M428 355h0M428 379h0M237 424h0M245 424h0M499 424h0M1012 233h0M1118 233h0M1216 233h0M1012 347h0M1012 355h0M1012 379h0M1118 347h0M1118 355h0M1118 379h0M884 424h0M1167 424h0M1191 424h0M1199 424h0M1312 424h0M1312 331h0M901 331h0M909 331h0M876 331h0M200 608h0M200 618h0M237 643h0M245 643h0M500 643h0M520 643h0M428 610h0M428 618h0M92 732h0M100 732h0M237 732h0M245 732h0M338 732h0M346 732h0M500 732h0M520 732h0M200 687h0M200 696h0M200 800h0M200 820h0M428 800h0M428 820h0M581 800h0M581 820h0M200 933h0M200 953h0M428 933h0M428 953h0M581 605h0M581 687h0M581 695h0M620 643h0M608 854h0M230 970h0M240 970h0M250 970h0M500 970h0M520 970h0M1012 597h0M1012 605h0M1216 573h0M1216 581h0M1216 606h0M1012 866h0M1012 888h0M1118 866h0M1118 888h0M760 866h0M760 888h0M1272 643h0M1295 643h0M1304 643h0M1272 732h0M1295 732h0M1304 732h0M1272 854h0M1295 854h0M1304 854h0M1272 970h0M1295 970h0M1304 970h0M1046 732h0M1054 732h0M1046 854h0M1054 854h0M860 970h0M866 970h0M1046 970h0M1054 970h0M630 970h0M1393 235h0M1393 251h0M1393 274h0M1393 347h0M1393 355h0M1393 424h0M1393 497h0M1393 573h0M1393 581h0M1393 713h0M1393 811h0M1424 235h0M1424 274h0M1424 355h0M1424 379h0M1424 643h0M1424 865h0M1424 885h0M1012 643h0M859 732h0M966 643h0"/>

<!-- room tags -->
<path class="nb" d="M94 465H138V484H94ZM366 465H410V484H366ZM438 262H480V281H438ZM654 467H699V485H654ZM1035 466H1078V484H1035ZM1237 262H1281V281H1237ZM1145 745H1189V763H1145ZM6 672H47V689H6ZM355 642H399V660H355ZM111 728H151V745H111ZM255 732H299V750H255ZM89 856H120V874H89ZM566 612H610V630H566ZM524 701H566V722H524ZM705 746H750V764H705ZM921 746H964V764H921Z"/>

<g>
<text class="t" x="59" y="293">pm 75</text><text class="t" x="67" y="322">4,40</text><text class="t" x="52" y="414">4,40</text>
<text class="t r" transform="translate(47 202) rotate(-90)">30</text><text class="t r" transform="translate(71 202) rotate(-90)">160</text>
<text class="t r" transform="translate(192 226) rotate(-90)">10</text><text class="t r" transform="translate(191 285) rotate(-90)">30</text><text class="t r" transform="translate(220 310) rotate(-90)">pm 0</text>
<text class="t" x="246" y="322">30</text><text class="t" x="281" y="322">10</text><text class="t" x="312" y="322">240</text><text class="t" x="317" y="298">90</text>
<text class="t r" transform="translate(361 298) rotate(-90)">90</text><text class="t r" transform="translate(387 300) rotate(-90)">180</text><text class="t" x="386" y="322">2,70</text>
<text class="t r" transform="translate(421 282) rotate(-90)">1,40</text><text class="t r" transform="translate(421 333) rotate(-90)">10</text><text class="t r" transform="translate(421 392) rotate(-90)">30</text>
<text class="t" x="459" y="272">0.5.07</text><text class="t" x="458" y="291">erkély</text><text class="t" x="458" y="309">3,8 m²</text><text class="t" x="458" y="327">greslap</text><text class="t" x="498" y="322">15</text>
<text class="t" x="374" y="398">pm 60</text><text class="t" x="363" y="414">3,15</text><text class="t" x="226" y="414">10</text><text class="t" x="486" y="415">25</text>
<text class="t r" transform="translate(193 488) rotate(-90)">5,10</text><text class="t r" transform="translate(421 503) rotate(-90)">2,85</text>
<text class="t" x="116" y="475">0.5.04</text><text class="t" x="115" y="495">nappali</text><text class="t" x="115" y="513">20,0 m²</text><text class="t" x="115" y="531">laminált p.</text>
<text class="t" x="388" y="475">0.5.06</text><text class="t" x="387" y="495">szoba</text><text class="t" x="387" y="513">9,0 m²</text><text class="t" x="387" y="531">laminált p.</text>
<text class="t" x="268" y="557">90</text><text class="t" x="265" y="582">210</text>

<text class="t" x="698" y="293">pm 75</text><text class="t r" transform="translate(573 283) rotate(-90)">30</text><text class="t r" transform="translate(750 285) rotate(-90)">30</text><text class="t" x="706" y="322">4,40</text><text class="t" x="532" y="322">25</text><text class="t r" transform="translate(858 310) rotate(-90)">pm 0</text><text class="t" x="884" y="322">30</text><text class="t" x="921" y="322">10</text><text class="t" x="952" y="322">240</text><text class="t" x="956" y="298">90</text>
<text class="t" x="690" y="414">4,40</text><text class="t r" transform="translate(573 437) rotate(-90)">4,00</text><text class="t" x="864" y="414">10</text>
<text class="t" x="676" y="476">0.4.04</text><text class="t" x="678" y="495">nappali</text><text class="t" x="678" y="513">22,0 m²</text><text class="t" x="678" y="531">laminált p.</text>

<text class="t r" transform="translate(1004 282) rotate(-90)">1,40</text><text class="t r" transform="translate(1041 298) rotate(-90)">90</text><text class="t r" transform="translate(1066 300) rotate(-90)">240</text><text class="t r" transform="translate(1109 282) rotate(-90)">1,40</text><text class="t" x="1117" y="322">5,00</text><text class="t r" transform="translate(1003 335) rotate(-90)">10</text><text class="t r" transform="translate(1110 335) rotate(-90)">10</text>
<text class="t" x="1257" y="272">0.4.08</text><text class="t" x="1257" y="290">erkély</text><text class="t" x="1257" y="309">10,9 m²</text><text class="t" x="1257" y="326">greslap</text>
<text class="t r" transform="translate(1209 395) rotate(-90)">4,20</text><text class="t" x="1210" y="415">10</text><text class="t" x="1262" y="415">1,40</text><text class="t" x="1016" y="415">3,50</text><text class="t r" transform="translate(1003 393) rotate(-90)">30</text><text class="t" x="1046" y="399">pm 0</text><text class="t r" transform="translate(1109 393) rotate(-90)">30</text><text class="t" x="1153" y="415">30</text>
<text class="t r" transform="translate(1150 460) rotate(-90)">pm 90</text><text class="t" x="1247" y="449">90</text><text class="t" x="1243" y="472">150</text>
<text class="t" x="1056" y="476">0.4.07</text><text class="t" x="1056" y="495">szoba</text><text class="t" x="1056" y="513">9,4 m²</text><text class="t" x="1056" y="531">laminált p.</text>
<text class="t r" transform="translate(1003 489) rotate(-90)">2,70</text><text class="t r" transform="translate(1109 497) rotate(-90)">2,70</text><text class="t r" transform="translate(912 573) rotate(-90)">90</text><text class="t r" transform="translate(937 577) rotate(-90)">210</text><text class="t r" transform="translate(1225 525) rotate(-90)">90</text><text class="t r" transform="translate(1247 529) rotate(-90)">240</text><text class="t r" transform="translate(1208 560) rotate(-90)">10</text><text class="t r" transform="translate(1003 588) rotate(-90)">10</text>

<text class="t r" transform="translate(1385 222) rotate(-90)">120</text><text class="t r" transform="translate(1417 222) rotate(-90)">120</text><text class="t r" transform="translate(1385 283) rotate(-90)">30</text><text class="t r" transform="translate(1417 283) rotate(-90)">30</text><text class="t r" transform="translate(1385 320) rotate(-90)">90</text><text class="t r" transform="translate(1417 320) rotate(-90)">1,00</text><text class="t r" transform="translate(1385 365) rotate(-90)">10</text><text class="t r" transform="translate(1417 387) rotate(-90)">30</text><text class="t r" transform="translate(1385 397) rotate(-90)">85</text><text class="t r" transform="translate(1385 460) rotate(-90)">90</text><text class="t r" transform="translate(1417 488) rotate(-90)">2,50</text><text class="t r" transform="translate(1385 535) rotate(-90)">95</text><text class="t r" transform="translate(1385 590) rotate(-90)">10</text><text class="t r" transform="translate(1417 615) rotate(-90)">30</text><text class="t r" transform="translate(1385 652) rotate(-90)">1,63</text><text class="t r" transform="translate(1417 742) rotate(-90)">3,23</text><text class="t r" transform="translate(1385 757) rotate(-90)">1,20</text><text class="t r" transform="translate(1385 870) rotate(-90)">1,63</text><text class="t r" transform="translate(1417 897) rotate(-90)">25</text>

<text class="t" x="1113" y="636">3,70</text><text class="t r" transform="translate(1110 617) rotate(-90)">10</text><text class="t r" transform="translate(1208 625) rotate(-90)">30</text><text class="t" x="1235" y="625">pm 0</text><text class="t" x="1258" y="636">30</text><text class="t" x="1315" y="636">10</text><text class="t" x="996" y="633">90</text><text class="t" x="992" y="658">210</text><text class="t r" transform="translate(1022 645) rotate(-90)">1,00</text>
<text class="t" x="1153" y="724">2,70</text><text class="t r" transform="translate(1108 750) rotate(-90)">3,23</text><text class="t r" transform="translate(1207 750) rotate(-90)">3,23</text><text class="t" x="1258" y="724">30</text><text class="t" x="1315" y="724">10</text>
<text class="t" x="1167" y="754">0.4.06</text><text class="t" x="1168" y="774">szoba</text><text class="t" x="1168" y="792">9,7 m²</text><text class="t" x="1168" y="811">laminált p.</text><text class="t r" transform="translate(1256 762) rotate(-90)">pm 90</text><text class="t" x="1349" y="750">120</text><text class="t" x="1349" y="775">150</text>
<text class="t" x="1153" y="846">2,70</text><text class="t" x="1258" y="846">30</text><text class="t" x="1315" y="846">10</text><text class="t r" transform="translate(1110 898) rotate(-90)">25</text><text class="t r" transform="translate(1209 898) rotate(-90)">25</text><text class="t" x="1153" y="961">2,70</text><text class="t" x="1258" y="961">30</text><text class="t" x="1315" y="961">10</text><text class="t" x="1349" y="977">120</text>

<text class="t" x="52" y="635">4,40</text><text class="t" x="26" y="680">0.5.03</text><text class="t" x="27" y="700">konyha</text><text class="t" x="27" y="718">6,1 m²</text><text class="t" x="27" y="737">greslap</text><text class="t" x="80" y="723">10</text><text class="t" x="168" y="723">1,70</text><text class="t" x="213" y="717">75</text><text class="t" x="216" y="742">210</text><text class="t r" transform="translate(184 663) rotate(-90)">90</text><text class="t r" transform="translate(209 665) rotate(-90)">210</text><text class="t" x="226" y="637">10</text><text class="t" x="268" y="640">75</text><text class="t" x="265" y="665">210</text>
<text class="t" x="363" y="636">3,15</text><text class="t" x="377" y="651">0.5.05</text><text class="t" x="377" y="670">fürdő</text><text class="t" x="377" y="688">5,3 m²</text><text class="t" x="377" y="708">greslap</text><text class="t" x="405" y="723">1,90</text><text class="t" x="486" y="637">25</text><text class="t" x="487" y="724">25</text><text class="t r" transform="translate(422 715) rotate(-90)">2,25</text><text class="t r" transform="translate(421 627) rotate(-90)">10</text><text class="t r" transform="translate(192 703) rotate(-90)">10</text>
<text class="t" x="131" y="737">0.5.01</text><text class="t" x="128" y="756">előtér</text><text class="t" x="130" y="775">2,7 m²</text><text class="t" x="130" y="792">greslap</text><text class="t" x="284" y="723">1,15</text><text class="t" x="245" y="723">10</text><text class="t" x="277" y="741">0.5.02</text><text class="t" x="277" y="757">wc</text><text class="t" x="277" y="775">1,4 m²</text><text class="t" x="277" y="792">greslap</text><text class="t" x="326" y="723">10</text>
<text class="t em" transform="translate(475 772) rotate(180)">M</text><text class="t em" x="912" y="914">M</text>
<text class="t r" transform="translate(192 750) rotate(-90)">1,30</text><text class="t r" transform="translate(184 778) rotate(-90)">100</text><text class="t r" transform="translate(209 778) rotate(-90)">210</text><text class="t r" transform="translate(190 808) rotate(-90)">25</text>
<text class="t" x="117" y="846">11,95</text><text class="t" x="31" y="871">+8,60</text><text class="t" x="105" y="865">0.02</text><text class="t" x="107" y="879">közlekedő</text><text class="t" x="107" y="897">12,7 m²</text><text class="t" x="107" y="916">greslap</text>
<text class="t r" transform="translate(192 870) rotate(-90)">1,40</text><text class="t r" transform="translate(420 870) rotate(-90)">1,40</text><text class="t r" transform="translate(573 870) rotate(-90)">1,40</text>
<text class="t big" x="213" y="840" textLength="74" lengthAdjust="spacingAndGlyphs">0.5. lakás</text><text class="t big" x="213" y="861" textLength="63" lengthAdjust="spacingAndGlyphs">44,0 m²</text><text class="t big" x="471" y="840" textLength="73" lengthAdjust="spacingAndGlyphs">0.4. lakás</text><text class="t big" x="471" y="861" textLength="63" lengthAdjust="spacingAndGlyphs">54,8 m²</text><text class="t big" x="471" y="896" textLength="73" lengthAdjust="spacingAndGlyphs">0.3. lakás</text><text class="t big" x="471" y="917" textLength="63" lengthAdjust="spacingAndGlyphs">64,3 m²</text>
<text class="t" x="587" y="846">25</text><text class="t" x="60" y="961">4,04</text><text class="t r" transform="translate(190 968) rotate(-90)">25</text><text class="t" x="220" y="961">5</text><text class="t" x="268" y="961">10</text><text class="t" x="376" y="961">3,00</text><text class="t r" transform="translate(422 962) rotate(-90)">25</text><text class="t" x="486" y="961">25</text><text class="t" x="240" y="945">20</text>
<text class="t" x="588" y="621">0.4.02</text><text class="t" x="585" y="640">wc</text><text class="t" x="585" y="658">1,2 m²</text><text class="t" x="585" y="677">greslap</text><text class="t" x="553" y="635">1,25</text><text class="t r" transform="translate(555 665) rotate(-90)">1,00</text><text class="t" x="544" y="707">0.4.01</text><text class="t" x="545" y="724">előtér</text><text class="t" x="545" y="743">1,6 m²</text><text class="t" x="545" y="762">greslap</text><text class="t r" transform="translate(575 715) rotate(-90)">75</text><text class="t r" transform="translate(598 712) rotate(-90)">210</text><text class="t r" transform="translate(570 750) rotate(-90)">1,30</text><text class="t" x="605" y="743">25</text><text class="t r" transform="translate(548 778) rotate(-90)">100</text><text class="t r" transform="translate(573 778) rotate(-90)">210</text><text class="t r" transform="translate(573 808) rotate(-90)">25</text>
<text class="t" x="653" y="723">90</text><text class="t" x="649" y="747">210</text><text class="t" x="736" y="723">2,84</text><text class="t" x="727" y="755">0.4.03</text><text class="t" x="725" y="775">konyha</text><text class="t" x="725" y="793">6,3 m²</text><text class="t" x="725" y="811">greslap</text><text class="t" x="740" y="846">2,84</text><text class="t" x="848" y="723">10</text><text class="t r" transform="translate(889 709) rotate(-90)">75</text><text class="t r" transform="translate(913 707) rotate(-90)">210</text><text class="t" x="949" y="723">2,21</text><text class="t" x="942" y="754">0.4.05</text><text class="t" x="941" y="775">fürdő</text><text class="t" x="941" y="792">4,6 m²</text><text class="t r" transform="translate(1003 705) rotate(-90)">10</text><text class="t" x="1033" y="723">10</text>
<text class="t" x="736" y="961">2,84</text><text class="t" x="849" y="961">10</text><text class="t" x="947" y="961">2,21</text><text class="t r" transform="translate(751 898) rotate(-90)">25</text><text class="t r" transform="translate(1003 898) rotate(-90)">25</text><text class="t r" transform="translate(751 582) rotate(-90)">33</text>
</g>

<!-- selected takeoff area -->
<path class="sel-fill" d="M520 273H577V254H820V273H896V346L876 347V606H965V687H810V695H859V866H630V597H520Z"/>
<path class="sel-line" d="M520 273H577V254H820V273H896V346H876V606H965V687H810V695H859V866H630V597H520Z"/>
<path d="M710 660L630 866" fill="none" stroke="#8e3a3c" stroke-width="2" stroke-dasharray="15 10"/>
<g class="sel-nd"><circle cx="520" cy="273" r="4"/><circle cx="577" cy="254" r="4"/><circle cx="577" cy="273" r="4"/><circle cx="820" cy="254" r="4"/><circle cx="820" cy="273" r="4"/><circle cx="896" cy="273" r="4"/><circle cx="876" cy="347" r="4"/><circle cx="876" cy="606" r="4"/><circle cx="965" cy="606" r="4"/><circle cx="965" cy="687" r="4"/><circle cx="810" cy="691" r="4"/><circle cx="859" cy="695" r="4"/><circle cx="859" cy="866" r="4"/><circle cx="630" cy="866" r="4"/><circle cx="630" cy="597" r="4"/><circle cx="520" cy="597" r="4"/></g>
<circle cx="896" cy="345" r="5" fill="#8e3a3c"/>

<rect x="707" y="622" width="245" height="41" fill="none" stroke="#8e3a3c" stroke-width="4"/>
<rect x="712" y="627" width="235" height="31" fill="none" stroke="#8e3a3c" stroke-width="1.200"/>
<text class="lbl" x="830" y="651">1 X 29.26m2 = 29.26m2</text>

<text class="logo1" x="1267" y="932" textLength="126" lengthAdjust="spacingAndGlyphs">GONDA</text>
<text class="logo2" x="1293" y="951" textLength="100" lengthAdjust="spacingAndGlyphs">Software</text>
</svg>

<div class="vbar">
 <div class="vrule"></div>
 <button class="btn tb b-orange" type="button"><svg><use href="#i-nav"/></svg></button>
 <div class="vrule"></div>
 <button class="btn tb b-blue" type="button"><svg><use href="#i-dsq"/></svg></button>
 <button class="btn tb b-blue" type="button"><svg><use href="#i-lr"/></svg></button>
 <button class="btn tb b-orange" type="button"><svg><use href="#i-calc"/></svg></button>
 <button class="btn tb b-blue" type="button"><svg><use href="#i-lock"/></svg></button>
 <button class="btn tb b-green gapm" type="button"><svg><use href="#i-archive"/></svg></button>
</div>
<div class="pop">
 <button class="btn pop-q" type="button">?</button>
 <button class="btn pop-w" type="button">wood floor</button>
</div>
</div>
<div class="mark-box mb-a"></div>
<div class="mark-box mb-b"></div>
<script src="https://cdn.jsdelivr.net/npm/bootstrap@5.3.0/dist/js/bootstrap.bundle.min.js"></script>
</body></html>
